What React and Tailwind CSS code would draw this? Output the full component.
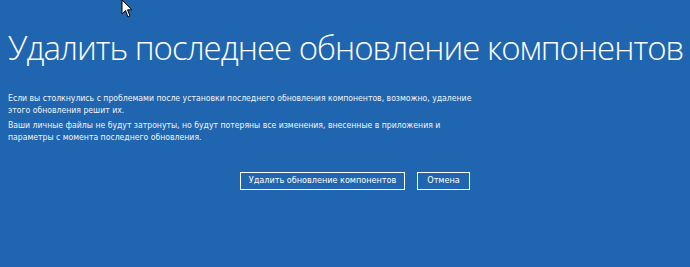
export default function App() {
  return (
    <div className="relative w-[690px] h-[267px] bg-[#1f65b0] text-white overflow-hidden">
      <div className="pl-[8px] pt-[24px]">
        <h1 className="font-['Open_Sans',sans-serif] font-light text-[33px] leading-[48px] whitespace-nowrap tracking-[-1px]">
          Удалить последнее обновление компонентов
        </h1>
        <div className="mt-[20px] font-['DejaVu_Sans_Condensed','DejaVu_Sans',sans-serif] font-stretch-condensed text-[8.6px] leading-[12px] text-[#f2f5fa]">
          <p>Если вы столкнулись с проблемами после установки последнего обновления компонентов, возможно, удаление<br />этого обновления решит их.</p>
          <p className="mt-[3px]">Ваши личные файлы не будут затронуты, но будут потеряны все изменения, внесенные в приложения и<br />параметры с момента последнего обновления.</p>
        </div>
        <div className="mt-[29px] flex gap-[12px] pl-[232px] font-['DejaVu_Sans_Condensed','DejaVu_Sans',sans-serif] font-stretch-condensed text-[9px]">
          <button className="h-[18px] w-[165px] border border-white flex items-center justify-center">Удалить обновление компонентов</button>
          <button className="h-[18px] w-[53px] border border-white flex items-center justify-center">Отмена</button>
        </div>
      </div>
      <svg className="absolute left-[121px] top-0" width="14" height="20" viewBox="0 0 14 20">
        <path d="M1 0 L1 14 L4.5 10.5 L7 17 L9 16 L6.5 9.8 L11 9.8 Z" fill="white" stroke="black" strokeWidth="1" />
      </svg>
    </div>
  );
}
